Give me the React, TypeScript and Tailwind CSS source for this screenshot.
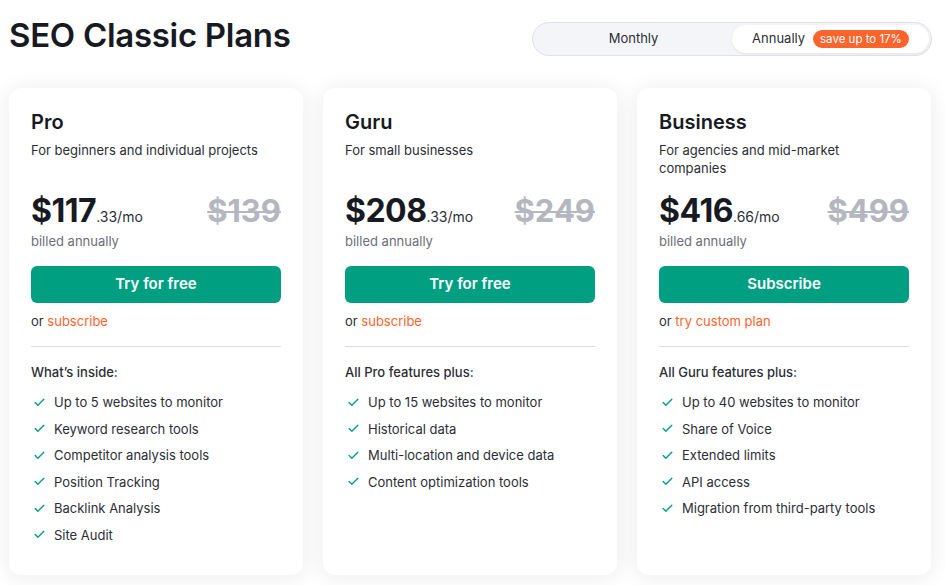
import { Check } from 'lucide-react'

type Plan = {
  name: string
  desc: string
  price: string
  cents: string
  old: string
  cta: string
  alt: string
  listTitle: string
  features: string[]
}

const plans: Plan[] = [
  {
    name: 'Pro',
    desc: 'For beginners and individual projects',
    price: '$117',
    cents: '.33/mo',
    old: '$139',
    cta: 'Try for free',
    alt: 'subscribe',
    listTitle: 'What’s inside:',
    features: [
      'Up to 5 websites to monitor',
      'Keyword research tools',
      'Competitor analysis tools',
      'Position Tracking',
      'Backlink Analysis',
      'Site Audit',
    ],
  },
  {
    name: 'Guru',
    desc: 'For small businesses',
    price: '$208',
    cents: '.33/mo',
    old: '$249',
    cta: 'Try for free',
    alt: 'subscribe',
    listTitle: 'All Pro features plus:',
    features: [
      'Up to 15 websites to monitor',
      'Historical data',
      'Multi-location and device data',
      'Content optimization tools',
    ],
  },
  {
    name: 'Business',
    desc: 'For agencies and mid-market companies',
    price: '$416',
    cents: '.66/mo',
    old: '$499',
    cta: 'Subscribe',
    alt: 'try custom plan',
    listTitle: 'All Guru features plus:',
    features: [
      'Up to 40 websites to monitor',
      'Share of Voice',
      'Extended limits',
      'API access',
      'Migration from third-party tools',
    ],
  },
]

function PlanCard({ plan }: { plan: Plan }) {
  return (
    <div className="bg-white rounded-[12px] shadow-[0_2px_22px_rgba(30,35,60,0.09)] px-[22px] pt-[20px] pb-[31px] flex flex-col">
      <h2 className="text-[20px] leading-[28px] font-semibold text-[#171a22]">{plan.name}</h2>
      <p className="mt-[5px] text-[13px] leading-[18px] text-[#2b2e36] min-h-[36px] max-w-[240px]">{plan.desc}</p>

      <div className="mt-[16px] flex items-baseline justify-between h-[36px]">
        <div className="flex items-baseline">
          <span className="text-[32px] leading-[36px] font-bold tracking-[-0.5px] text-[#171a22]">{plan.price}</span>
          <span className="text-[14px] text-[#2b2e36]">{plan.cents}</span>
        </div>
        <span className="text-[31px] leading-[36px] font-bold text-[#b5b7c0] line-through decoration-[2px]">{plan.old}</span>
      </div>
      <p className="mt-[3px] text-[13px] leading-[18px] text-[#6c6e79]">billed annually</p>

      <button className="mt-[16px] h-[37px] w-full rounded-[6px] bg-[#009f81] text-white text-[15px] font-semibold">
        {plan.cta}
      </button>
      <p className="mt-[9px] text-[13px] leading-[18px] text-[#2b2e36]">
        or <span className="text-[#ff642d]">{plan.alt}</span>
      </p>

      <div className="mt-[16px] h-px bg-[#dcdde3]" />

      <p className="mt-[16px] text-[13px] leading-[18px] font-medium text-[#2b2e36]">{plan.listTitle}</p>
      <ul className="mt-[12px] flex flex-col gap-[8.6px]">
        {plan.features.map((f) => (
          <li key={f} className="flex items-center text-[13px] leading-[18px] text-[#2b2e36]">
            <Check className="w-[13px] h-[13px] ml-[2px] mr-[8px] text-[#009f81]" strokeWidth={2.5} />
            {f}
          </li>
        ))}
      </ul>
    </div>
  )
}

export default function App() {
  return (
    <div className="w-[945px] h-[585px] bg-white overflow-hidden font-['Inter',sans-serif] px-[9px]">
      <div className="flex items-center justify-between pt-[14px]">
        <h1 className="text-[33px] leading-[40px] font-semibold tracking-[-0.3px] text-[#171a22]">SEO Classic Plans</h1>
        <div className="mr-[4px] mt-[8px] w-[400px] h-[34px] rounded-full border border-[#e0e1e9] bg-[#f4f5f9] p-[2px] flex">
          <button className="flex-1 rounded-full text-[13px] text-[#2b2e36]">Monthly</button>
          <button className="flex-1 rounded-full bg-white shadow-[0_1px_3px_rgba(0,0,0,0.08)] flex items-center justify-center gap-[8px] text-[13px] text-[#2b2e36]">
            Annually
            <span className="rounded-full bg-[#ff642d] text-white text-[11.5px] leading-[18px] px-[7px]">save up to 17%</span>
          </button>
        </div>
      </div>

      <div className="mt-[32px] grid grid-cols-3 gap-[20px] pr-[5px]">
        {plans.map((p) => (
          <PlanCard key={p.name} plan={p} />
        ))}
      </div>
    </div>
  )
}
